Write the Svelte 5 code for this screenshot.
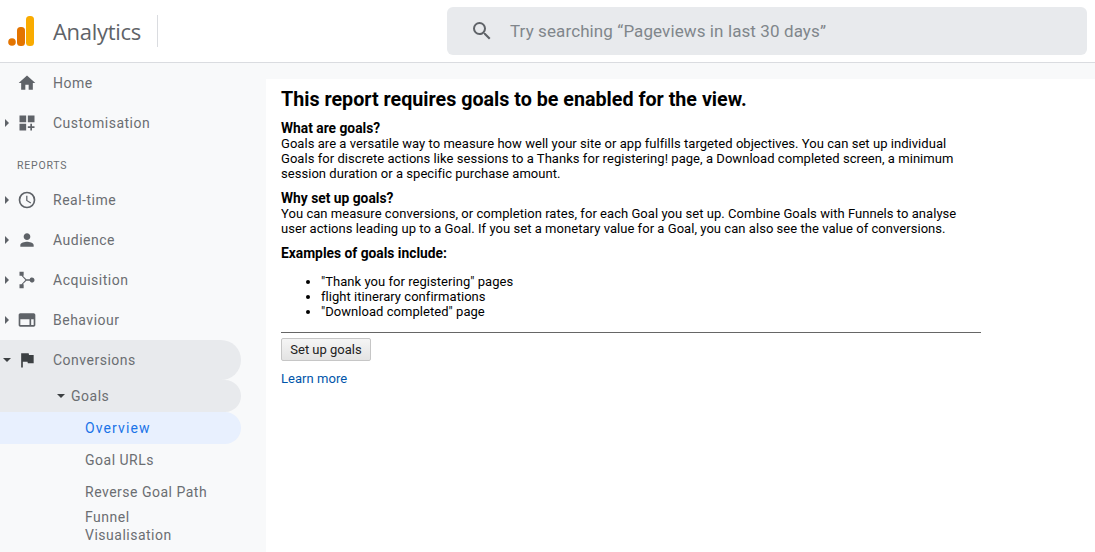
<script>
const topItems = [
  { label: "Home", icon: "home" },
  { label: "Customisation", icon: "custom", arrow: true }
];
const reportItems = [
  { label: "Real-time", icon: "clock", arrow: true },
  { label: "Audience", icon: "person", arrow: true },
  { label: "Acquisition", icon: "acq", arrow: true },
  { label: "Behaviour", icon: "behaviour", arrow: true }
];
const icons = {
  home: "M10 20v-6h4v6h5v-8h3L12 3 2 12h3v8z",
  custom: "M3 3h8v8H3zM13 3h8v8h-8zM3 13h8v8H3zM16 13h2v3h3v2h-3v3h-2v-3h-3v-2h3z",
  person: "M12 12c2.200 0 4-1.800 4-4s-1.800-4-4-4-4 1.800-4 4 1.800 4 4 4zm0 2c-2.700 0-8 1.300-8 4v2h16v-2c0-2.700-5.300-4-8-4z",
  acq: "M3 2h5v5H6.900l4.300 4h4a3 3 0 1 1 0 2h-4l-4.300 4H8v5H3v-5h2.400l4.700-5-4.700-5H3z",
  behaviour: "M20 4H4c-1.100 0-2 .9-2 2v12c0 1.100.9 2 2 2h16c1.100 0 2-.9 2-2V6c0-1.100-.9-2-2-2zM4 18v-7h11v7zm16 0h-3v-7h3z",
  flag: "M14.400 6 14 4H5v17h2v-7h5.600l.4 2h7V6z"
};
</script>

{#snippet navIcon(name)}
  {#if name === "clock"}
    <svg class="icon" viewBox="0 0 24 24"><path d="M12 2a10 10 0 1 0 0 20 10 10 0 0 0 0-20zm0 18a8 8 0 1 1 0-16 8 8 0 0 1 0 16zm.5-13H11v6l5.200 3.200.8-1.300-4.500-2.700z" /></svg>
  {:else}
    <svg class="icon" viewBox="0 0 24 24"><path d={icons[name]} /></svg>
  {/if}
{/snippet}

{#snippet row(item)}
  <div class="row">
    {#if item.arrow}<span class="arrow right"></span>{/if}
    {@render navIcon(item.icon)}
    <span class="label">{item.label}</span>
  </div>
{/snippet}

<div class="page">
  <header class="top">
    <div class="brand">
      <svg class="logo" viewBox="0 0 26 30" width="26" height="30">
        <rect x="18" y="0" width="8" height="30" rx="3.500" fill="#f9ab00" />
        <rect x="9" y="11" width="8" height="19" rx="3.500" fill="#e37400" />
        <circle cx="4" cy="26" r="3.800" fill="#e37400" />
      </svg>
      <span class="product">Analytics</span>
    </div>
    <div class="search">
      <svg class="search-icon" viewBox="0 0 24 24"><path d="M15.500 14h-.79l-.28-.27A6.470 6.470 0 0 0 16 9.500 6.500 6.500 0 1 0 9.500 16c1.610 0 3.090-.59 4.230-1.570l.27.28v.79l5 4.990L20.490 19zm-6 0C7.010 14 5 11.990 5 9.500S7.010 5 9.500 5 14 7.010 14 9.500 11.990 14 9.500 14z" /></svg>
      <span>Try searching “Pageviews in last 30 days”</span>
    </div>
  </header>

  <div class="body">
    <nav class="side">
      {#each topItems as item}
        {@render row(item)}
      {/each}
      <div class="heading">REPORTS</div>
      {#each reportItems as item}
        {@render row(item)}
      {/each}
      <div class="row open">
        <span class="arrow down"></span>
        <svg class="icon dark" viewBox="0 0 24 24"><path d={icons.flag} /></svg>
        <span class="label">Conversions</span>
      </div>
      <div class="sub open">
        <span class="arrow down small"></span>
        <span class="label">Goals</span>
      </div>
      <div class="leaf active">Overview</div>
      <div class="leaf">Goal URLs</div>
      <div class="leaf">Reverse Goal Path</div>
      <div class="leaf wrap">Funnel Visualisation</div>
    </nav>

    <div class="content-wrap">
      <main class="content">
        <h1>This report requires goals to be enabled for the view.</h1>
        <p>
          <b>What are goals?</b><br />
          Goals are a versatile way to measure how well your site or app fulfills targeted objectives. You can set up individual Goals for discrete actions like sessions to a Thanks for registering! page, a Download completed screen, a minimum session duration or a specific purchase amount.
        </p>
        <p>
          <b>Why set up goals?</b><br />
          You can measure conversions, or completion rates, for each Goal you set up. Combine Goals with Funnels to analyse user actions leading up to a Goal. If you set a monetary value for a Goal, you can also see the value of conversions.
        </p>
        <p><b>Examples of goals include:</b></p>
        <ul>
          <li>"Thank you for registering" pages</li>
          <li>flight itinerary confirmations</li>
          <li>"Download completed" page</li>
        </ul>
        <hr />
        <button>Set up goals</button>
        <a href="#learn">Learn more</a>
      </main>
    </div>
  </div>
</div>

<style>
:global(body) { margin: 0; background: #fff; overflow: hidden; }
.page { width: 1095px; height: 552px; overflow: hidden; display: flex; flex-direction: column; font-family: Roboto, "Liberation Sans", sans-serif; }
.top { height: 62px; flex: none; display: flex; align-items: center; border-bottom: 1px solid #dadce0; background: #fff; }
.brand { width: 447px; height: 100%; display: flex; align-items: center; flex: none; box-sizing: border-box; padding-left: 8px; }
.logo { flex: none; margin-bottom: 1px; }
.product { font-family: "Open Sans", Roboto, sans-serif; font-size: 22px; letter-spacing: -0.3px; color: #5f6368; margin-left: 19px; padding-right: 16px; height: 32px; line-height: 32px; border-right: 1px solid #dadce0; }
.search { width: 640px; height: 48px; background: #e8eaed; border-radius: 6px; display: flex; align-items: center; font-size: 17px; letter-spacing: 0.1px; color: #80868b; }
.search-icon { width: 24px; height: 24px; margin: 0 16px 0 23px; fill: #5f6368; }
.body { flex: 1; display: flex; min-height: 0; background: #f8f9fa; }
.side { width: 266px; flex: none; padding-right: 25px; box-sizing: border-box; font-size: 14px; letter-spacing: 0.5px; color: #6b6e72; }
.row { height: 40px; display: flex; align-items: center; position: relative; padding-left: 17px; border-radius: 0 20px 20px 0; }
.icon { width: 20px; height: 20px; fill: #5f6368; flex: none; }
.icon.dark { fill: #3c4043; }
.label { margin-left: 16px; }
.arrow { position: absolute; width: 0; height: 0; border-style: solid; border-color: transparent; }
.arrow.right { left: 5px; top: 16px; border-width: 4px 0 4px 4px; border-left-color: #5f6368; }
.arrow.down { left: 3px; top: 18px; border-width: 4px 4px 0 4px; border-top-color: #3c4043; }
.arrow.small { left: 57px; top: 14px; }
.heading { height: 37px; padding-left: 17px; display: flex; align-items: center; box-sizing: border-box; padding-top: 8px; font-size: 10.500px; letter-spacing: 0.8px; color: #6b6e72; }
.open { background: #e8eaed; }
.sub { height: 32px; position: relative; display: flex; align-items: center; padding-left: 55px; border-radius: 0 20px 20px 0; }
.leaf { height: 32px; line-height: 32px; padding-left: 85px; border-radius: 0 16px 16px 0; }
.leaf.active { background: #e8f0fe; color: #1a73e8; letter-spacing: 1.100px; }
.leaf.wrap { height: auto; line-height: 18px; width: 100px; padding: 0 0 0 85px; }
.content-wrap { flex: 1; padding-top: 16px; min-width: 0; }
.content { background: #fff; height: 100%; box-sizing: border-box; padding: 10px 15px; font-size: 13px; letter-spacing: 0.045px; line-height: 15px; color: #000; }
.content > * { max-width: 700px; }
h1 { margin: 0 0 11px; font-size: 19.700px; line-height: 21px; font-weight: 700; letter-spacing: 0; }
.content > p { margin: 0 0 10px; max-width: 690px; }
b { font-size: 13.800px; letter-spacing: 0; }
ul { margin: 13px 0 13px; padding-left: 40px; }
hr { margin: 0 0 5px; border: none; border-top: 1px solid #666; }
button { display: block; width: 90px; height: 23px; padding: 0; border: 1px solid #c6c6c6; border-radius: 2px; background: linear-gradient(#f5f5f5, #e3e3e3); font: inherit; color: #222; }
a { display: block; margin-top: 10px; color: #05a; text-decoration: none; }
</style>
